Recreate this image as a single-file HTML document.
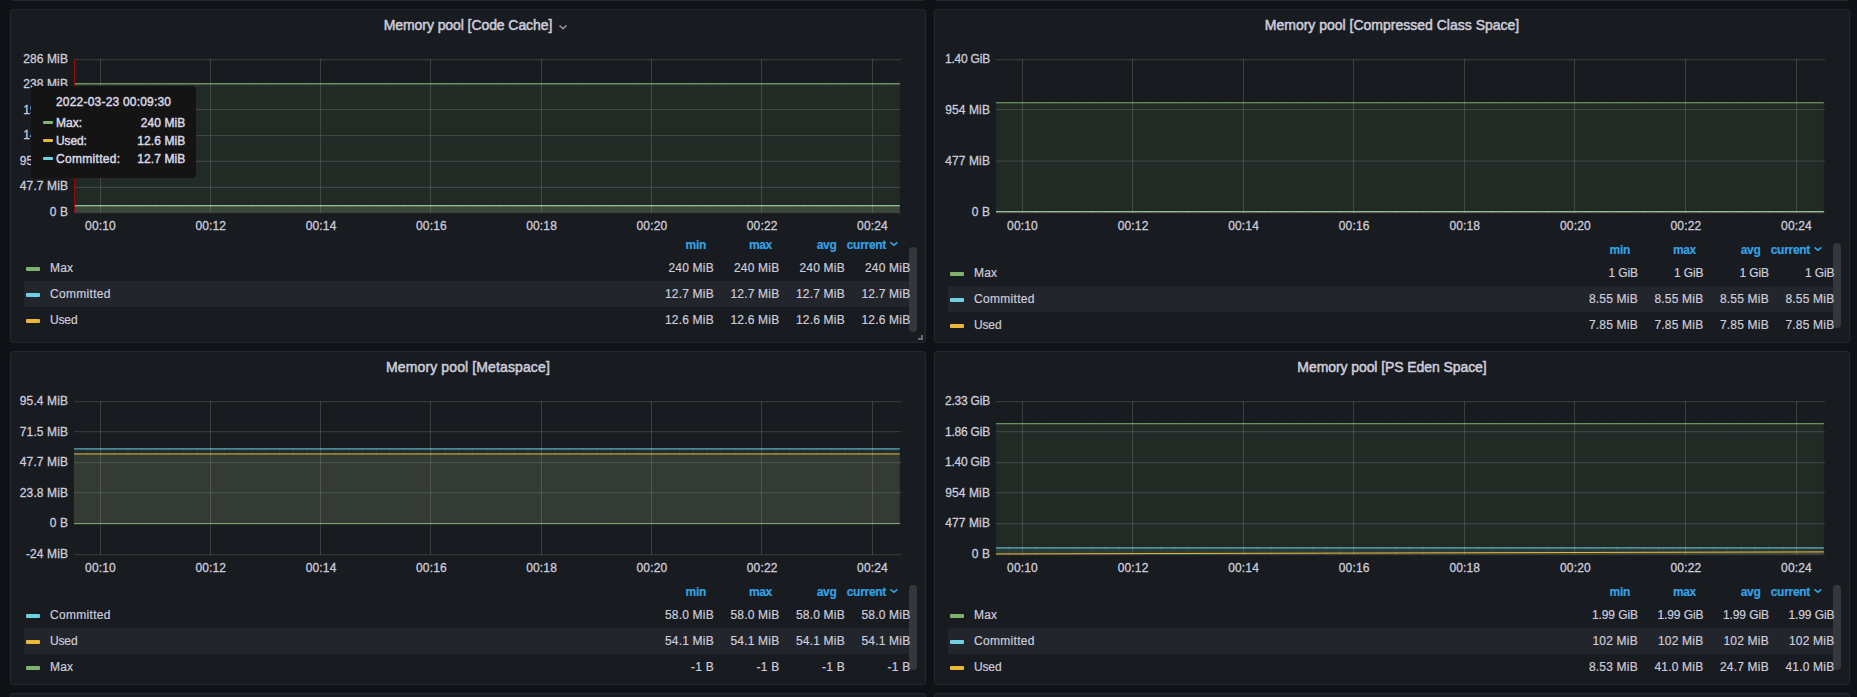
<!DOCTYPE html>
<html lang="en"><head><meta charset="utf-8"><title>JVM Memory pools - Grafana</title>
<style>
*{box-sizing:border-box;margin:0;padding:0}
html,body{width:1857px;height:697px;overflow:hidden;background:#111217}
body{font-family:"Liberation Sans",Arial,sans-serif;color:#ccccdc;font-size:12px;line-height:14px;-webkit-text-stroke:0.2px #ccccdc}
#root{position:relative;width:1857px;height:697px;overflow:hidden;background:#111217}
.panel{position:absolute;width:916px;height:334px;background:#181b1f;border:1px solid #25272c;border-radius:3px}
.title{position:absolute;left:0;top:5px;width:914px;height:20px;text-align:center;font-size:14px;line-height:20px;font-weight:500;letter-spacing:-0.08px;color:#ccccdc;white-space:nowrap}
.title span{position:relative;display:inline-block;-webkit-text-stroke:0.5px #ccccdc}
.title svg{position:absolute;left:100%;top:9px;margin-left:6px}
svg.chart{position:absolute;left:-1px;top:-1px;width:916px;height:334px;overflow:visible}
svg.chart text{font-family:"Liberation Sans",Arial,sans-serif;font-size:12px;fill:#ccccdc;stroke:#ccccdc;stroke-width:0.3px}
.legend{position:absolute;left:13px;width:888px}
.legend .hd{position:relative;height:20px}
.legend .hd b{-webkit-text-stroke:0.2px #33a2e5;position:absolute;top:3px;font-weight:700;color:#33a2e5;font-size:12px;line-height:14px;text-align:right;width:60px;letter-spacing:-0.3px}
.legend .row{position:relative;height:26px}
.legend .row.alt{background:#22252b}
.legend .row i{position:absolute;left:2px;top:12px;width:14px;height:4px;border-radius:1px}
.legend .row .nm{position:absolute;left:26px;top:6px;line-height:14px;white-space:nowrap;letter-spacing:0.4px}
.legend .row .v{position:absolute;z-index:2;top:6px;width:64px;text-align:right;line-height:14px;white-space:nowrap;letter-spacing:0.2px}
.thumb{position:absolute;z-index:1;width:8px;border-radius:4px;background:#35373c}
.tip{position:absolute;z-index:5;left:31px;top:86px;width:165px;height:92px;background:#141414;border-radius:4px;color:#d8d9e4;font-size:12px;line-height:14px;-webkit-text-stroke:0.45px #d8d9e4}
.tip .tm{position:absolute;left:25px;top:9px;white-space:nowrap;letter-spacing:0.2px}
.tip .r{position:absolute;left:0;width:165px;height:18px}
.tip .r i{position:absolute;left:12px;top:5px;width:10px;height:3px;border-radius:1px}
.tip .r .n{position:absolute;left:25px;top:0;white-space:nowrap;letter-spacing:0.2px}
.tip .r .val{position:absolute;right:10.6px;top:0;white-space:nowrap;letter-spacing:0.1px}
.handle{position:absolute;left:907px;top:325px;width:5px;height:5px;border-right:2px solid #6c6d72;border-bottom:2px solid #6c6d72}
</style></head><body><div id="root">
<div class="panel" style="left:10px;top:-333px"></div>
<div class="panel" style="left:10px;top:693px"></div>
<div class="panel" style="left:934px;top:-333px"></div>
<div class="panel" style="left:934px;top:693px"></div>
<div class="panel" style="left:10px;top:9px">
<div class="title"><span style="letter-spacing:-0.08px">Memory pool [Code Cache]<svg width="11" height="8" viewBox="0 0 11 8"><path d="M1.5 1.5 L5 4.7 L8.5 1.5" fill="none" stroke="#8f909c" stroke-width="1.6"/></svg></span></div>
<svg class="chart" viewBox="0 0 916 334">
<g stroke="#c8c8c8" stroke-opacity="0.2" stroke-width="1" shape-rendering="crispEdges">
<line x1="90.5" x2="90.5" y1="50" y2="204"/>
<line x1="200.5" x2="200.5" y1="50" y2="204"/>
<line x1="310.5" x2="310.5" y1="50" y2="204"/>
<line x1="420.5" x2="420.5" y1="50" y2="204"/>
<line x1="531.5" x2="531.5" y1="50" y2="204"/>
<line x1="641.5" x2="641.5" y1="50" y2="204"/>
<line x1="751.5" x2="751.5" y1="50" y2="204"/>
<line x1="862.5" x2="862.5" y1="50" y2="204"/>
</g>
<g fill="#c8c8c8" fill-opacity="0.2">
<rect x="64" y="50.2" width="827" height="1"/>
<rect x="64" y="75.2" width="827" height="1"/>
<rect x="64" y="100.0" width="827" height="1"/>
<rect x="64" y="126.1" width="827" height="1"/>
<rect x="64" y="151.8" width="827" height="1"/>
<rect x="64" y="177.9" width="827" height="1"/>
<rect x="64" y="203.2" width="827" height="1"/>
</g>
<path d="M64.00,74.70 L889.80,74.70 L889.80,203.30 L64.00,203.30 Z" fill="#7EB26D" fill-opacity="0.1"/>
<path d="M64.00,196.75 L889.80,196.75 L889.80,203.30 L64.00,203.30 Z" fill="#EAB839" fill-opacity="0.1"/>
<path d="M64.00,196.60 L889.80,196.60 L889.80,203.30 L64.00,203.30 Z" fill="#6ED0E0" fill-opacity="0.1"/>
<path d="M64.00,74.70 L889.80,74.70" fill="none" stroke="#7EB26D" stroke-width="1" stroke-opacity="1"/>
<path d="M64.00,196.75 L889.80,196.75" fill="none" stroke="#EAB839" stroke-width="1" stroke-opacity="1"/>
<path d="M64.00,196.60 L889.80,196.60" fill="none" stroke="#6ED0E0" stroke-width="1" stroke-opacity="0.75"/>
<path d="M76.7,74.70h0M90.5,74.70h0M104.3,74.70h0M118.1,74.70h0M131.9,74.70h0M145.6,74.70h0M159.4,74.70h0M173.2,74.70h0M187.0,74.70h0M200.8,74.70h0M214.6,74.70h0M228.4,74.70h0M242.1,74.70h0M255.9,74.70h0M269.7,74.70h0M283.5,74.70h0M297.3,74.70h0M311.1,74.70h0M324.9,74.70h0M338.6,74.70h0M352.4,74.70h0M366.2,74.70h0M380.0,74.70h0M393.8,74.70h0M407.6,74.70h0M421.4,74.70h0M435.1,74.70h0M448.9,74.70h0M462.7,74.70h0M476.5,74.70h0M490.3,74.70h0M504.1,74.70h0M517.9,74.70h0M531.6,74.70h0M545.4,74.70h0M559.2,74.70h0M573.0,74.70h0M586.8,74.70h0M600.6,74.70h0M614.4,74.70h0M628.1,74.70h0M641.9,74.70h0M655.7,74.70h0M669.5,74.70h0M683.3,74.70h0M697.1,74.70h0M710.9,74.70h0M724.6,74.70h0M738.4,74.70h0M752.2,74.70h0M766.0,74.70h0M779.8,74.70h0M793.6,74.70h0M807.4,74.70h0M821.1,74.70h0M834.9,74.70h0M848.7,74.70h0M862.5,74.70h0M876.3,74.70h0" fill="none" stroke="#7EB26D" stroke-width="1.5" stroke-linecap="round" stroke-opacity="0.35"/>
<path d="M76.7,196.75h0M90.5,196.75h0M104.3,196.75h0M118.1,196.75h0M131.9,196.75h0M145.6,196.75h0M159.4,196.75h0M173.2,196.75h0M187.0,196.75h0M200.8,196.75h0M214.6,196.75h0M228.4,196.75h0M242.1,196.75h0M255.9,196.75h0M269.7,196.75h0M283.5,196.75h0M297.3,196.75h0M311.1,196.75h0M324.9,196.75h0M338.6,196.75h0M352.4,196.75h0M366.2,196.75h0M380.0,196.75h0M393.8,196.75h0M407.6,196.75h0M421.4,196.75h0M435.1,196.75h0M448.9,196.75h0M462.7,196.75h0M476.5,196.75h0M490.3,196.75h0M504.1,196.75h0M517.9,196.75h0M531.6,196.75h0M545.4,196.75h0M559.2,196.75h0M573.0,196.75h0M586.8,196.75h0M600.6,196.75h0M614.4,196.75h0M628.1,196.75h0M641.9,196.75h0M655.7,196.75h0M669.5,196.75h0M683.3,196.75h0M697.1,196.75h0M710.9,196.75h0M724.6,196.75h0M738.4,196.75h0M752.2,196.75h0M766.0,196.75h0M779.8,196.75h0M793.6,196.75h0M807.4,196.75h0M821.1,196.75h0M834.9,196.75h0M848.7,196.75h0M862.5,196.75h0M876.3,196.75h0" fill="none" stroke="#EAB839" stroke-width="1.5" stroke-linecap="round" stroke-opacity="0.35"/>
<path d="M76.7,196.60h0M90.5,196.60h0M104.3,196.60h0M118.1,196.60h0M131.9,196.60h0M145.6,196.60h0M159.4,196.60h0M173.2,196.60h0M187.0,196.60h0M200.8,196.60h0M214.6,196.60h0M228.4,196.60h0M242.1,196.60h0M255.9,196.60h0M269.7,196.60h0M283.5,196.60h0M297.3,196.60h0M311.1,196.60h0M324.9,196.60h0M338.6,196.60h0M352.4,196.60h0M366.2,196.60h0M380.0,196.60h0M393.8,196.60h0M407.6,196.60h0M421.4,196.60h0M435.1,196.60h0M448.9,196.60h0M462.7,196.60h0M476.5,196.60h0M490.3,196.60h0M504.1,196.60h0M517.9,196.60h0M531.6,196.60h0M545.4,196.60h0M559.2,196.60h0M573.0,196.60h0M586.8,196.60h0M600.6,196.60h0M614.4,196.60h0M628.1,196.60h0M641.9,196.60h0M655.7,196.60h0M669.5,196.60h0M683.3,196.60h0M697.1,196.60h0M710.9,196.60h0M724.6,196.60h0M738.4,196.60h0M752.2,196.60h0M766.0,196.60h0M779.8,196.60h0M793.6,196.60h0M807.4,196.60h0M821.1,196.60h0M834.9,196.60h0M848.7,196.60h0M862.5,196.60h0M876.3,196.60h0" fill="none" stroke="#6ED0E0" stroke-width="1.5" stroke-linecap="round" stroke-opacity="0.35"/>
<rect x="64" y="50" width="1" height="154" fill="#9a0808"/>
<text x="58" y="53.9" text-anchor="end" letter-spacing="0.1">286 MiB</text>
<text x="58" y="79.4" text-anchor="end" letter-spacing="0.1">238 MiB</text>
<text x="58" y="104.9" text-anchor="end" letter-spacing="0.1">191 MiB</text>
<text x="58" y="130.4" text-anchor="end" letter-spacing="0.1">143 MiB</text>
<text x="58" y="155.9" text-anchor="end" letter-spacing="0.1">95.4 MiB</text>
<text x="58" y="181.4" text-anchor="end" letter-spacing="0.1">47.7 MiB</text>
<text x="58" y="206.9" text-anchor="end" letter-spacing="0.1">0 B</text>
<text x="90.5" y="221.3" text-anchor="middle" letter-spacing="0.15">00:10</text>
<text x="200.8" y="221.3" text-anchor="middle" letter-spacing="0.15">00:12</text>
<text x="311.1" y="221.3" text-anchor="middle" letter-spacing="0.15">00:14</text>
<text x="421.4" y="221.3" text-anchor="middle" letter-spacing="0.15">00:16</text>
<text x="531.6" y="221.3" text-anchor="middle" letter-spacing="0.15">00:18</text>
<text x="641.9" y="221.3" text-anchor="middle" letter-spacing="0.15">00:20</text>
<text x="752.2" y="221.3" text-anchor="middle" letter-spacing="0.15">00:22</text>
<text x="862.5" y="221.3" text-anchor="middle" letter-spacing="0.15">00:24</text>
</svg>
<div class="thumb" style="left:898px;top:237px;height:85px"></div>
<div class="legend" style="top:225px">
<div class="hd">
<b style="left:622px">min</b>
<b style="left:688px">max</b>
<b style="left:752.5px">avg</b>
<b style="left:802px">current</b>
<svg style="position:absolute;left:865px;top:6px" width="11" height="8" viewBox="0 0 11 8"><path d="M1.4 1.4 L4.9 4.2 L8.4 1.4" fill="none" stroke="#33a2e5" stroke-width="1.5"/></svg>
</div>
<div class="row"><i style="background:#7EB26D"></i><span class="nm" style="letter-spacing:0.2px">Max</span>
<span class="v" style="left:625.9px">240 MiB</span>
<span class="v" style="left:691.4px">240 MiB</span>
<span class="v" style="left:756.9px">240 MiB</span>
<span class="v" style="left:822.4px">240 MiB</span>
</div>
<div class="row alt"><i style="background:#6ED0E0"></i><span class="nm" style="letter-spacing:0.3px">Committed</span>
<span class="v" style="left:625.9px">12.7 MiB</span>
<span class="v" style="left:691.4px">12.7 MiB</span>
<span class="v" style="left:756.9px">12.7 MiB</span>
<span class="v" style="left:822.4px">12.7 MiB</span>
</div>
<div class="row"><i style="background:#EAB839"></i><span class="nm" style="letter-spacing:-0.15px">Used</span>
<span class="v" style="left:625.9px">12.6 MiB</span>
<span class="v" style="left:691.4px">12.6 MiB</span>
<span class="v" style="left:756.9px">12.6 MiB</span>
<span class="v" style="left:822.4px">12.6 MiB</span>
</div>
</div>
<div class="handle"></div>
</div>
<div class="panel" style="left:934px;top:9px">
<div class="title"><span style="letter-spacing:0.0px">Memory pool [Compressed Class Space]</span></div>
<svg class="chart" viewBox="0 0 916 334">
<g stroke="#c8c8c8" stroke-opacity="0.2" stroke-width="1" shape-rendering="crispEdges">
<line x1="88.5" x2="88.5" y1="50" y2="204"/>
<line x1="198.5" x2="198.5" y1="50" y2="204"/>
<line x1="309.5" x2="309.5" y1="50" y2="204"/>
<line x1="419.5" x2="419.5" y1="50" y2="204"/>
<line x1="530.5" x2="530.5" y1="50" y2="204"/>
<line x1="640.5" x2="640.5" y1="50" y2="204"/>
<line x1="751.5" x2="751.5" y1="50" y2="204"/>
<line x1="862.5" x2="862.5" y1="50" y2="204"/>
</g>
<g fill="#c8c8c8" fill-opacity="0.2">
<rect x="62" y="50.2" width="829" height="1"/>
<rect x="62" y="100.0" width="829" height="1"/>
<rect x="62" y="151.6" width="829" height="1"/>
<rect x="62" y="203.2" width="829" height="1"/>
</g>
<path d="M62.00,93.75 L889.80,93.75 L889.80,203.30 L62.00,203.30 Z" fill="#7EB26D" fill-opacity="0.1"/>
<path d="M62.00,202.75 L889.80,202.75 L889.80,203.30 L62.00,203.30 Z" fill="#EAB839" fill-opacity="0.1"/>
<path d="M62.00,202.60 L889.80,202.60 L889.80,203.30 L62.00,203.30 Z" fill="#6ED0E0" fill-opacity="0.1"/>
<path d="M62.00,93.75 L889.80,93.75" fill="none" stroke="#7EB26D" stroke-width="1" stroke-opacity="1"/>
<path d="M62.00,202.75 L889.80,202.75" fill="none" stroke="#EAB839" stroke-width="1" stroke-opacity="1"/>
<path d="M62.00,202.60 L889.80,202.60" fill="none" stroke="#6ED0E0" stroke-width="1" stroke-opacity="0.75"/>
<path d="M74.7,93.75h0M88.5,93.75h0M102.3,93.75h0M116.1,93.75h0M130.0,93.75h0M143.8,93.75h0M157.6,93.75h0M171.4,93.75h0M185.2,93.75h0M199.1,93.75h0M212.9,93.75h0M226.7,93.75h0M240.5,93.75h0M254.4,93.75h0M268.2,93.75h0M282.0,93.75h0M295.8,93.75h0M309.6,93.75h0M323.5,93.75h0M337.3,93.75h0M351.1,93.75h0M364.9,93.75h0M378.8,93.75h0M392.6,93.75h0M406.4,93.75h0M420.2,93.75h0M434.0,93.75h0M447.9,93.75h0M461.7,93.75h0M475.5,93.75h0M489.3,93.75h0M503.1,93.75h0M517.0,93.75h0M530.8,93.75h0M544.6,93.75h0M558.4,93.75h0M572.2,93.75h0M586.1,93.75h0M599.9,93.75h0M613.7,93.75h0M627.5,93.75h0M641.4,93.75h0M655.2,93.75h0M669.0,93.75h0M682.8,93.75h0M696.6,93.75h0M710.5,93.75h0M724.3,93.75h0M738.1,93.75h0M751.9,93.75h0M765.8,93.75h0M779.6,93.75h0M793.4,93.75h0M807.2,93.75h0M821.0,93.75h0M834.9,93.75h0M848.7,93.75h0M862.5,93.75h0M876.3,93.75h0" fill="none" stroke="#7EB26D" stroke-width="1.5" stroke-linecap="round" stroke-opacity="0.35"/>
<path d="M74.7,202.75h0M88.5,202.75h0M102.3,202.75h0M116.1,202.75h0M130.0,202.75h0M143.8,202.75h0M157.6,202.75h0M171.4,202.75h0M185.2,202.75h0M199.1,202.75h0M212.9,202.75h0M226.7,202.75h0M240.5,202.75h0M254.4,202.75h0M268.2,202.75h0M282.0,202.75h0M295.8,202.75h0M309.6,202.75h0M323.5,202.75h0M337.3,202.75h0M351.1,202.75h0M364.9,202.75h0M378.8,202.75h0M392.6,202.75h0M406.4,202.75h0M420.2,202.75h0M434.0,202.75h0M447.9,202.75h0M461.7,202.75h0M475.5,202.75h0M489.3,202.75h0M503.1,202.75h0M517.0,202.75h0M530.8,202.75h0M544.6,202.75h0M558.4,202.75h0M572.2,202.75h0M586.1,202.75h0M599.9,202.75h0M613.7,202.75h0M627.5,202.75h0M641.4,202.75h0M655.2,202.75h0M669.0,202.75h0M682.8,202.75h0M696.6,202.75h0M710.5,202.75h0M724.3,202.75h0M738.1,202.75h0M751.9,202.75h0M765.8,202.75h0M779.6,202.75h0M793.4,202.75h0M807.2,202.75h0M821.0,202.75h0M834.9,202.75h0M848.7,202.75h0M862.5,202.75h0M876.3,202.75h0" fill="none" stroke="#EAB839" stroke-width="1.5" stroke-linecap="round" stroke-opacity="0.35"/>
<path d="M74.7,202.60h0M88.5,202.60h0M102.3,202.60h0M116.1,202.60h0M130.0,202.60h0M143.8,202.60h0M157.6,202.60h0M171.4,202.60h0M185.2,202.60h0M199.1,202.60h0M212.9,202.60h0M226.7,202.60h0M240.5,202.60h0M254.4,202.60h0M268.2,202.60h0M282.0,202.60h0M295.8,202.60h0M309.6,202.60h0M323.5,202.60h0M337.3,202.60h0M351.1,202.60h0M364.9,202.60h0M378.8,202.60h0M392.6,202.60h0M406.4,202.60h0M420.2,202.60h0M434.0,202.60h0M447.9,202.60h0M461.7,202.60h0M475.5,202.60h0M489.3,202.60h0M503.1,202.60h0M517.0,202.60h0M530.8,202.60h0M544.6,202.60h0M558.4,202.60h0M572.2,202.60h0M586.1,202.60h0M599.9,202.60h0M613.7,202.60h0M627.5,202.60h0M641.4,202.60h0M655.2,202.60h0M669.0,202.60h0M682.8,202.60h0M696.6,202.60h0M710.5,202.60h0M724.3,202.60h0M738.1,202.60h0M751.9,202.60h0M765.8,202.60h0M779.6,202.60h0M793.4,202.60h0M807.2,202.60h0M821.0,202.60h0M834.9,202.60h0M848.7,202.60h0M862.5,202.60h0M876.3,202.60h0" fill="none" stroke="#6ED0E0" stroke-width="1.5" stroke-linecap="round" stroke-opacity="0.35"/>
<text x="56" y="53.9" text-anchor="end" letter-spacing="-0.2">1.40 GiB</text>
<text x="56" y="104.9" text-anchor="end" letter-spacing="0.1">954 MiB</text>
<text x="56" y="155.9" text-anchor="end" letter-spacing="0.1">477 MiB</text>
<text x="56" y="206.9" text-anchor="end" letter-spacing="0.1">0 B</text>
<text x="88.5" y="221.3" text-anchor="middle" letter-spacing="0.15">00:10</text>
<text x="199.1" y="221.3" text-anchor="middle" letter-spacing="0.15">00:12</text>
<text x="309.6" y="221.3" text-anchor="middle" letter-spacing="0.15">00:14</text>
<text x="420.2" y="221.3" text-anchor="middle" letter-spacing="0.15">00:16</text>
<text x="530.8" y="221.3" text-anchor="middle" letter-spacing="0.15">00:18</text>
<text x="641.4" y="221.3" text-anchor="middle" letter-spacing="0.15">00:20</text>
<text x="751.9" y="221.3" text-anchor="middle" letter-spacing="0.15">00:22</text>
<text x="862.5" y="221.3" text-anchor="middle" letter-spacing="0.15">00:24</text>
</svg>
<div class="thumb" style="left:898px;top:233px;height:85px"></div>
<div class="legend" style="top:230px">
<div class="hd">
<b style="left:622px">min</b>
<b style="left:688px">max</b>
<b style="left:752.5px">avg</b>
<b style="left:802px">current</b>
<svg style="position:absolute;left:865px;top:6px" width="11" height="8" viewBox="0 0 11 8"><path d="M1.4 1.4 L4.9 4.2 L8.4 1.4" fill="none" stroke="#33a2e5" stroke-width="1.5"/></svg>
</div>
<div class="row"><i style="background:#7EB26D"></i><span class="nm" style="letter-spacing:0.2px">Max</span>
<span class="v" style="left:625.9px;letter-spacing:-0.1px">1 GiB</span>
<span class="v" style="left:691.4px;letter-spacing:-0.1px">1 GiB</span>
<span class="v" style="left:756.9px;letter-spacing:-0.1px">1 GiB</span>
<span class="v" style="left:822.4px;letter-spacing:-0.1px">1 GiB</span>
</div>
<div class="row alt"><i style="background:#6ED0E0"></i><span class="nm" style="letter-spacing:0.3px">Committed</span>
<span class="v" style="left:625.9px">8.55 MiB</span>
<span class="v" style="left:691.4px">8.55 MiB</span>
<span class="v" style="left:756.9px">8.55 MiB</span>
<span class="v" style="left:822.4px">8.55 MiB</span>
</div>
<div class="row"><i style="background:#EAB839"></i><span class="nm" style="letter-spacing:-0.15px">Used</span>
<span class="v" style="left:625.9px">7.85 MiB</span>
<span class="v" style="left:691.4px">7.85 MiB</span>
<span class="v" style="left:756.9px">7.85 MiB</span>
<span class="v" style="left:822.4px">7.85 MiB</span>
</div>
</div>
</div>
<div class="panel" style="left:10px;top:351px">
<div class="title"><span style="letter-spacing:0.12px">Memory pool [Metaspace]</span></div>
<svg class="chart" viewBox="0 0 916 334">
<g stroke="#c8c8c8" stroke-opacity="0.2" stroke-width="1" shape-rendering="crispEdges">
<line x1="90.5" x2="90.5" y1="50" y2="204"/>
<line x1="200.5" x2="200.5" y1="50" y2="204"/>
<line x1="310.5" x2="310.5" y1="50" y2="204"/>
<line x1="420.5" x2="420.5" y1="50" y2="204"/>
<line x1="531.5" x2="531.5" y1="50" y2="204"/>
<line x1="641.5" x2="641.5" y1="50" y2="204"/>
<line x1="751.5" x2="751.5" y1="50" y2="204"/>
<line x1="862.5" x2="862.5" y1="50" y2="204"/>
</g>
<g fill="#c8c8c8" fill-opacity="0.2">
<rect x="64" y="50.2" width="827" height="1"/>
<rect x="64" y="80.2" width="827" height="1"/>
<rect x="64" y="111.2" width="827" height="1"/>
<rect x="64" y="141.2" width="827" height="1"/>
<rect x="64" y="172.2" width="827" height="1"/>
<rect x="64" y="203.2" width="827" height="1"/>
</g>
<path d="M64.00,172.60 L889.80,172.60 L889.80,172.50 L64.00,172.50 Z" fill="#7EB26D" fill-opacity="0.1"/>
<path d="M64.00,102.95 L889.80,102.95 L889.80,172.50 L64.00,172.50 Z" fill="#EAB839" fill-opacity="0.1"/>
<path d="M64.00,97.90 L889.80,97.90 L889.80,172.50 L64.00,172.50 Z" fill="#6ED0E0" fill-opacity="0.1"/>
<path d="M64.00,172.60 L889.80,172.60" fill="none" stroke="#7EB26D" stroke-width="1" stroke-opacity="1"/>
<path d="M64.00,102.95 L889.80,102.95" fill="none" stroke="#EAB839" stroke-width="1" stroke-opacity="1"/>
<path d="M64.00,97.90 L889.80,97.90" fill="none" stroke="#6ED0E0" stroke-width="1" stroke-opacity="1"/>
<path d="M76.7,172.60h0M90.5,172.60h0M104.3,172.60h0M118.1,172.60h0M131.9,172.60h0M145.6,172.60h0M159.4,172.60h0M173.2,172.60h0M187.0,172.60h0M200.8,172.60h0M214.6,172.60h0M228.4,172.60h0M242.1,172.60h0M255.9,172.60h0M269.7,172.60h0M283.5,172.60h0M297.3,172.60h0M311.1,172.60h0M324.9,172.60h0M338.6,172.60h0M352.4,172.60h0M366.2,172.60h0M380.0,172.60h0M393.8,172.60h0M407.6,172.60h0M421.4,172.60h0M435.1,172.60h0M448.9,172.60h0M462.7,172.60h0M476.5,172.60h0M490.3,172.60h0M504.1,172.60h0M517.9,172.60h0M531.6,172.60h0M545.4,172.60h0M559.2,172.60h0M573.0,172.60h0M586.8,172.60h0M600.6,172.60h0M614.4,172.60h0M628.1,172.60h0M641.9,172.60h0M655.7,172.60h0M669.5,172.60h0M683.3,172.60h0M697.1,172.60h0M710.9,172.60h0M724.6,172.60h0M738.4,172.60h0M752.2,172.60h0M766.0,172.60h0M779.8,172.60h0M793.6,172.60h0M807.4,172.60h0M821.1,172.60h0M834.9,172.60h0M848.7,172.60h0M862.5,172.60h0M876.3,172.60h0" fill="none" stroke="#7EB26D" stroke-width="1.5" stroke-linecap="round" stroke-opacity="0.35"/>
<path d="M76.7,102.95h0M90.5,102.95h0M104.3,102.95h0M118.1,102.95h0M131.9,102.95h0M145.6,102.95h0M159.4,102.95h0M173.2,102.95h0M187.0,102.95h0M200.8,102.95h0M214.6,102.95h0M228.4,102.95h0M242.1,102.95h0M255.9,102.95h0M269.7,102.95h0M283.5,102.95h0M297.3,102.95h0M311.1,102.95h0M324.9,102.95h0M338.6,102.95h0M352.4,102.95h0M366.2,102.95h0M380.0,102.95h0M393.8,102.95h0M407.6,102.95h0M421.4,102.95h0M435.1,102.95h0M448.9,102.95h0M462.7,102.95h0M476.5,102.95h0M490.3,102.95h0M504.1,102.95h0M517.9,102.95h0M531.6,102.95h0M545.4,102.95h0M559.2,102.95h0M573.0,102.95h0M586.8,102.95h0M600.6,102.95h0M614.4,102.95h0M628.1,102.95h0M641.9,102.95h0M655.7,102.95h0M669.5,102.95h0M683.3,102.95h0M697.1,102.95h0M710.9,102.95h0M724.6,102.95h0M738.4,102.95h0M752.2,102.95h0M766.0,102.95h0M779.8,102.95h0M793.6,102.95h0M807.4,102.95h0M821.1,102.95h0M834.9,102.95h0M848.7,102.95h0M862.5,102.95h0M876.3,102.95h0" fill="none" stroke="#EAB839" stroke-width="1.5" stroke-linecap="round" stroke-opacity="0.35"/>
<path d="M76.7,97.90h0M90.5,97.90h0M104.3,97.90h0M118.1,97.90h0M131.9,97.90h0M145.6,97.90h0M159.4,97.90h0M173.2,97.90h0M187.0,97.90h0M200.8,97.90h0M214.6,97.90h0M228.4,97.90h0M242.1,97.90h0M255.9,97.90h0M269.7,97.90h0M283.5,97.90h0M297.3,97.90h0M311.1,97.90h0M324.9,97.90h0M338.6,97.90h0M352.4,97.90h0M366.2,97.90h0M380.0,97.90h0M393.8,97.90h0M407.6,97.90h0M421.4,97.90h0M435.1,97.90h0M448.9,97.90h0M462.7,97.90h0M476.5,97.90h0M490.3,97.90h0M504.1,97.90h0M517.9,97.90h0M531.6,97.90h0M545.4,97.90h0M559.2,97.90h0M573.0,97.90h0M586.8,97.90h0M600.6,97.90h0M614.4,97.90h0M628.1,97.90h0M641.9,97.90h0M655.7,97.90h0M669.5,97.90h0M683.3,97.90h0M697.1,97.90h0M710.9,97.90h0M724.6,97.90h0M738.4,97.90h0M752.2,97.90h0M766.0,97.90h0M779.8,97.90h0M793.6,97.90h0M807.4,97.90h0M821.1,97.90h0M834.9,97.90h0M848.7,97.90h0M862.5,97.90h0M876.3,97.90h0" fill="none" stroke="#6ED0E0" stroke-width="1.5" stroke-linecap="round" stroke-opacity="0.35"/>
<text x="58" y="53.9" text-anchor="end" letter-spacing="0.1">95.4 MiB</text>
<text x="58" y="84.5" text-anchor="end" letter-spacing="0.1">71.5 MiB</text>
<text x="58" y="115.1" text-anchor="end" letter-spacing="0.1">47.7 MiB</text>
<text x="58" y="145.7" text-anchor="end" letter-spacing="0.1">23.8 MiB</text>
<text x="58" y="176.3" text-anchor="end" letter-spacing="0.1">0 B</text>
<text x="58" y="206.9" text-anchor="end" letter-spacing="0.1">-24 MiB</text>
<text x="90.5" y="221.3" text-anchor="middle" letter-spacing="0.15">00:10</text>
<text x="200.8" y="221.3" text-anchor="middle" letter-spacing="0.15">00:12</text>
<text x="311.1" y="221.3" text-anchor="middle" letter-spacing="0.15">00:14</text>
<text x="421.4" y="221.3" text-anchor="middle" letter-spacing="0.15">00:16</text>
<text x="531.6" y="221.3" text-anchor="middle" letter-spacing="0.15">00:18</text>
<text x="641.9" y="221.3" text-anchor="middle" letter-spacing="0.15">00:20</text>
<text x="752.2" y="221.3" text-anchor="middle" letter-spacing="0.15">00:22</text>
<text x="862.5" y="221.3" text-anchor="middle" letter-spacing="0.15">00:24</text>
</svg>
<div class="thumb" style="left:898px;top:233px;height:85px"></div>
<div class="legend" style="top:230px">
<div class="hd">
<b style="left:622px">min</b>
<b style="left:688px">max</b>
<b style="left:752.5px">avg</b>
<b style="left:802px">current</b>
<svg style="position:absolute;left:865px;top:6px" width="11" height="8" viewBox="0 0 11 8"><path d="M1.4 1.4 L4.9 4.2 L8.4 1.4" fill="none" stroke="#33a2e5" stroke-width="1.5"/></svg>
</div>
<div class="row"><i style="background:#6ED0E0"></i><span class="nm" style="letter-spacing:0.3px">Committed</span>
<span class="v" style="left:625.9px">58.0 MiB</span>
<span class="v" style="left:691.4px">58.0 MiB</span>
<span class="v" style="left:756.9px">58.0 MiB</span>
<span class="v" style="left:822.4px">58.0 MiB</span>
</div>
<div class="row alt"><i style="background:#EAB839"></i><span class="nm" style="letter-spacing:-0.15px">Used</span>
<span class="v" style="left:625.9px">54.1 MiB</span>
<span class="v" style="left:691.4px">54.1 MiB</span>
<span class="v" style="left:756.9px">54.1 MiB</span>
<span class="v" style="left:822.4px">54.1 MiB</span>
</div>
<div class="row"><i style="background:#7EB26D"></i><span class="nm" style="letter-spacing:0.2px">Max</span>
<span class="v" style="left:625.9px">-1 B</span>
<span class="v" style="left:691.4px">-1 B</span>
<span class="v" style="left:756.9px">-1 B</span>
<span class="v" style="left:822.4px">-1 B</span>
</div>
</div>
</div>
<div class="panel" style="left:934px;top:351px">
<div class="title"><span style="letter-spacing:-0.08px">Memory pool [PS Eden Space]</span></div>
<svg class="chart" viewBox="0 0 916 334">
<g stroke="#c8c8c8" stroke-opacity="0.2" stroke-width="1" shape-rendering="crispEdges">
<line x1="88.5" x2="88.5" y1="50" y2="204"/>
<line x1="198.5" x2="198.5" y1="50" y2="204"/>
<line x1="309.5" x2="309.5" y1="50" y2="204"/>
<line x1="419.5" x2="419.5" y1="50" y2="204"/>
<line x1="530.5" x2="530.5" y1="50" y2="204"/>
<line x1="640.5" x2="640.5" y1="50" y2="204"/>
<line x1="751.5" x2="751.5" y1="50" y2="204"/>
<line x1="862.5" x2="862.5" y1="50" y2="204"/>
</g>
<g fill="#c8c8c8" fill-opacity="0.2">
<rect x="62" y="50.2" width="829" height="1"/>
<rect x="62" y="80.2" width="829" height="1"/>
<rect x="62" y="111.2" width="829" height="1"/>
<rect x="62" y="141.2" width="829" height="1"/>
<rect x="62" y="172.2" width="829" height="1"/>
<rect x="62" y="203.2" width="829" height="1"/>
</g>
<path d="M62.00,72.73 L889.80,72.73 L889.80,203.30 L62.00,203.30 Z" fill="#7EB26D" fill-opacity="0.1"/>
<path d="M62.00,202.95 L889.80,200.87 L889.80,203.30 L62.00,203.30 Z" fill="#EAB839" fill-opacity="0.1"/>
<path d="M62.00,196.90 L889.80,196.90 L889.80,203.30 L62.00,203.30 Z" fill="#6ED0E0" fill-opacity="0.1"/>
<path d="M62.00,72.73 L889.80,72.73" fill="none" stroke="#7EB26D" stroke-width="1" stroke-opacity="1"/>
<path d="M62.00,202.95 L889.80,200.87" fill="none" stroke="#EAB839" stroke-width="1" stroke-opacity="1"/>
<path d="M62.00,196.90 L889.80,196.90" fill="none" stroke="#6ED0E0" stroke-width="1" stroke-opacity="1"/>
<path d="M74.7,72.73h0M88.5,72.73h0M102.3,72.73h0M116.1,72.73h0M130.0,72.73h0M143.8,72.73h0M157.6,72.73h0M171.4,72.73h0M185.2,72.73h0M199.1,72.73h0M212.9,72.73h0M226.7,72.73h0M240.5,72.73h0M254.4,72.73h0M268.2,72.73h0M282.0,72.73h0M295.8,72.73h0M309.6,72.73h0M323.5,72.73h0M337.3,72.73h0M351.1,72.73h0M364.9,72.73h0M378.8,72.73h0M392.6,72.73h0M406.4,72.73h0M420.2,72.73h0M434.0,72.73h0M447.9,72.73h0M461.7,72.73h0M475.5,72.73h0M489.3,72.73h0M503.1,72.73h0M517.0,72.73h0M530.8,72.73h0M544.6,72.73h0M558.4,72.73h0M572.2,72.73h0M586.1,72.73h0M599.9,72.73h0M613.7,72.73h0M627.5,72.73h0M641.4,72.73h0M655.2,72.73h0M669.0,72.73h0M682.8,72.73h0M696.6,72.73h0M710.5,72.73h0M724.3,72.73h0M738.1,72.73h0M751.9,72.73h0M765.8,72.73h0M779.6,72.73h0M793.4,72.73h0M807.2,72.73h0M821.0,72.73h0M834.9,72.73h0M848.7,72.73h0M862.5,72.73h0M876.3,72.73h0" fill="none" stroke="#7EB26D" stroke-width="1.5" stroke-linecap="round" stroke-opacity="0.35"/>
<path d="M74.7,202.92h0M88.5,202.88h0M102.3,202.85h0M116.1,202.81h0M130.0,202.78h0M143.8,202.74h0M157.6,202.71h0M171.4,202.68h0M185.2,202.64h0M199.1,202.61h0M212.9,202.57h0M226.7,202.54h0M240.5,202.50h0M254.4,202.47h0M268.2,202.43h0M282.0,202.40h0M295.8,202.36h0M309.6,202.33h0M323.5,202.29h0M337.3,202.26h0M351.1,202.22h0M364.9,202.19h0M378.8,202.15h0M392.6,202.12h0M406.4,202.08h0M420.2,202.05h0M434.0,202.02h0M447.9,201.98h0M461.7,201.95h0M475.5,201.91h0M489.3,201.88h0M503.1,201.84h0M517.0,201.81h0M530.8,201.77h0M544.6,201.74h0M558.4,201.70h0M572.2,201.67h0M586.1,201.63h0M599.9,201.60h0M613.7,201.56h0M627.5,201.53h0M641.4,201.49h0M655.2,201.46h0M669.0,201.42h0M682.8,201.39h0M696.6,201.36h0M710.5,201.32h0M724.3,201.29h0M738.1,201.25h0M751.9,201.22h0M765.8,201.18h0M779.6,201.15h0M793.4,201.11h0M807.2,201.08h0M821.0,201.04h0M834.9,201.01h0M848.7,200.97h0M862.5,200.94h0M876.3,200.90h0" fill="none" stroke="#EAB839" stroke-width="1.5" stroke-linecap="round" stroke-opacity="0.35"/>
<path d="M74.7,196.90h0M88.5,196.90h0M102.3,196.90h0M116.1,196.90h0M130.0,196.90h0M143.8,196.90h0M157.6,196.90h0M171.4,196.90h0M185.2,196.90h0M199.1,196.90h0M212.9,196.90h0M226.7,196.90h0M240.5,196.90h0M254.4,196.90h0M268.2,196.90h0M282.0,196.90h0M295.8,196.90h0M309.6,196.90h0M323.5,196.90h0M337.3,196.90h0M351.1,196.90h0M364.9,196.90h0M378.8,196.90h0M392.6,196.90h0M406.4,196.90h0M420.2,196.90h0M434.0,196.90h0M447.9,196.90h0M461.7,196.90h0M475.5,196.90h0M489.3,196.90h0M503.1,196.90h0M517.0,196.90h0M530.8,196.90h0M544.6,196.90h0M558.4,196.90h0M572.2,196.90h0M586.1,196.90h0M599.9,196.90h0M613.7,196.90h0M627.5,196.90h0M641.4,196.90h0M655.2,196.90h0M669.0,196.90h0M682.8,196.90h0M696.6,196.90h0M710.5,196.90h0M724.3,196.90h0M738.1,196.90h0M751.9,196.90h0M765.8,196.90h0M779.6,196.90h0M793.4,196.90h0M807.2,196.90h0M821.0,196.90h0M834.9,196.90h0M848.7,196.90h0M862.5,196.90h0M876.3,196.90h0" fill="none" stroke="#6ED0E0" stroke-width="1.5" stroke-linecap="round" stroke-opacity="0.35"/>
<text x="56" y="53.9" text-anchor="end" letter-spacing="-0.2">2.33 GiB</text>
<text x="56" y="84.5" text-anchor="end" letter-spacing="-0.2">1.86 GiB</text>
<text x="56" y="115.1" text-anchor="end" letter-spacing="-0.2">1.40 GiB</text>
<text x="56" y="145.7" text-anchor="end" letter-spacing="0.1">954 MiB</text>
<text x="56" y="176.3" text-anchor="end" letter-spacing="0.1">477 MiB</text>
<text x="56" y="206.9" text-anchor="end" letter-spacing="0.1">0 B</text>
<text x="88.5" y="221.3" text-anchor="middle" letter-spacing="0.15">00:10</text>
<text x="199.1" y="221.3" text-anchor="middle" letter-spacing="0.15">00:12</text>
<text x="309.6" y="221.3" text-anchor="middle" letter-spacing="0.15">00:14</text>
<text x="420.2" y="221.3" text-anchor="middle" letter-spacing="0.15">00:16</text>
<text x="530.8" y="221.3" text-anchor="middle" letter-spacing="0.15">00:18</text>
<text x="641.4" y="221.3" text-anchor="middle" letter-spacing="0.15">00:20</text>
<text x="751.9" y="221.3" text-anchor="middle" letter-spacing="0.15">00:22</text>
<text x="862.5" y="221.3" text-anchor="middle" letter-spacing="0.15">00:24</text>
</svg>
<div class="thumb" style="left:898px;top:233px;height:85px"></div>
<div class="legend" style="top:230px">
<div class="hd">
<b style="left:622px">min</b>
<b style="left:688px">max</b>
<b style="left:752.5px">avg</b>
<b style="left:802px">current</b>
<svg style="position:absolute;left:865px;top:6px" width="11" height="8" viewBox="0 0 11 8"><path d="M1.4 1.4 L4.9 4.2 L8.4 1.4" fill="none" stroke="#33a2e5" stroke-width="1.5"/></svg>
</div>
<div class="row"><i style="background:#7EB26D"></i><span class="nm" style="letter-spacing:0.2px">Max</span>
<span class="v" style="left:625.9px;letter-spacing:-0.1px">1.99 GiB</span>
<span class="v" style="left:691.4px;letter-spacing:-0.1px">1.99 GiB</span>
<span class="v" style="left:756.9px;letter-spacing:-0.1px">1.99 GiB</span>
<span class="v" style="left:822.4px;letter-spacing:-0.1px">1.99 GiB</span>
</div>
<div class="row alt"><i style="background:#6ED0E0"></i><span class="nm" style="letter-spacing:0.3px">Committed</span>
<span class="v" style="left:625.9px">102 MiB</span>
<span class="v" style="left:691.4px">102 MiB</span>
<span class="v" style="left:756.9px">102 MiB</span>
<span class="v" style="left:822.4px">102 MiB</span>
</div>
<div class="row"><i style="background:#EAB839"></i><span class="nm" style="letter-spacing:-0.15px">Used</span>
<span class="v" style="left:625.9px">8.53 MiB</span>
<span class="v" style="left:691.4px">41.0 MiB</span>
<span class="v" style="left:756.9px">24.7 MiB</span>
<span class="v" style="left:822.4px">41.0 MiB</span>
</div>
</div>
</div>
<div class="tip">
<div class="tm">2022-03-23 00:09:30</div>
<div class="r" style="top:30px"><i style="background:#7EB26D"></i><span class="n" style="letter-spacing:0.05px">Max:</span><span class="val">240 MiB</span></div>
<div class="r" style="top:48px"><i style="background:#EAB839"></i><span class="n" style="letter-spacing:-0.1px">Used:</span><span class="val">12.6 MiB</span></div>
<div class="r" style="top:66px"><i style="background:#6ED0E0"></i><span class="n" style="letter-spacing:0.3px">Committed:</span><span class="val">12.7 MiB</span></div>
</div>
</div></body></html>
